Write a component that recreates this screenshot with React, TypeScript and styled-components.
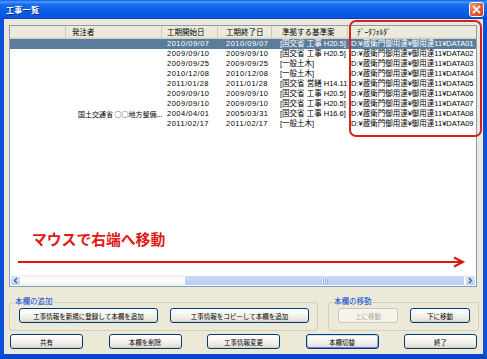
import React from 'react';
import styled, { createGlobalStyle, css } from 'styled-components';

const GlobalStyle = createGlobalStyle`
  html, body {
    margin: 0;
    padding: 0;
    background: #ffffff;
  }
  body {
    font-family: 'Liberation Sans', 'Noto Sans CJK JP', sans-serif;
  }
`;

const JP = `'Liberation Sans', 'Noto Sans CJK JP', sans-serif`;

const columns = [
  { label: '', width: 56, headPad: 6, cellPad: 4 },
  { label: '発注者', width: 96, headPad: 6, cellPad: 12 },
  { label: '工期開始日', width: 56, headPad: 5, cellPad: 5 },
  { label: '工期終了日', width: 54, headPad: 8, cellPad: 8 },
  { label: '準拠する基準案', width: 76, headPad: 10, cellPad: 8 },
  { label: 'ﾃﾞｰﾀﾌｫﾙﾀﾞ', width: 0, headPad: 9, cellPad: 3 },
];

const gridTemplate = columns.map((c) => (c.width ? `${c.width}px` : '1fr')).join(' ');

const rows = [
  ['', '2010/09/07', '2010/09/07', '[国交省 工事 H20.5]', 'D:¥蔵衛門御用達¥御用達11¥DATA01'],
  ['', '2009/09/10', '2009/09/10', '[国交省 工事 H20.5]', 'D:¥蔵衛門御用達¥御用達11¥DATA02'],
  ['', '2009/09/25', '2009/09/25', '[一般土木]', 'D:¥蔵衛門御用達¥御用達11¥DATA03'],
  ['', '2010/12/08', '2010/12/08', '[一般土木]', 'D:¥蔵衛門御用達¥御用達11¥DATA04'],
  ['', '2011/01/28', '2011/01/28', '[国交省 営繕 H14.11]', 'D:¥蔵衛門御用達¥御用達11¥DATA05'],
  ['', '2009/09/10', '2009/09/10', '[国交省 工事 H20.5]', 'D:¥蔵衛門御用達¥御用達11¥DATA06'],
  ['', '2009/09/10', '2009/09/10', '[国交省 工事 H20.5]', 'D:¥蔵衛門御用達¥御用達11¥DATA07'],
  ['国土交通省 ○○地方整備...', '2004/04/01', '2005/03/31', '[国交省 工事 H16.6]', 'D:¥蔵衛門御用達¥御用達11¥DATA08'],
  ['', '2011/02/17', '2011/02/17', '[一般土木]', 'D:¥蔵衛門御用達¥御用達11¥DATA09'],
];

const Window = styled.div`
  position: relative;
  width: 487px;
  height: 359px;
  box-sizing: border-box;
  display: flex;
  flex-direction: column;
  background: #ece9d8;
  overflow: hidden;
`;

const TitleBar = styled.div`
  height: 19px;
  flex: none;
  display: flex;
  align-items: center;
  justify-content: space-between;
  padding: 0 3px 0 6px;
  background: linear-gradient(
    180deg,
    #0a5ce0 0%,
    #4a9bff 10%,
    #1d6cf0 22%,
    #0b5de6 60%,
    #0a57e0 88%,
    #0044c8 100%
  );
`;

const TitleText = styled.span`
  color: #ffffff;
  font-family: ${JP};
  font-weight: bold;
  font-size: 8px;
  letter-spacing: 0.3px;
  text-shadow: 1px 1px 0 #0a2a8a;
`;

const CloseButton = styled.div`
  width: 13px;
  height: 13px;
  border: 1px solid #ffffff;
  border-radius: 3px;
  background: radial-gradient(circle at 30% 30%, #f19b7e 0%, #e0583a 55%, #c33f1d 100%);
  display: flex;
  align-items: center;
  justify-content: center;
`;

const Frame = styled.div`
  flex: 1;
  display: flex;
  flex-direction: column;
  border-left: 4px solid #0c4fd8;
  border-right: 4px solid #0c4fd8;
  border-bottom: 5px solid #0a46c8;
  padding: 6px 6px 4px 5px;
`;

const ListView = styled.div`
  height: 262px;
  flex: none;
  box-sizing: border-box;
  border: 1px solid #7f9db9;
  background: #ffffff;
  display: flex;
  flex-direction: column;
`;

const HeaderRow = styled.div`
  display: grid;
  grid-template-columns: ${gridTemplate};
  height: 13px;
  background: #ebeadb;
  box-shadow: inset 0 -1px 0 #d6d2c2, inset 0 -2px 0 #e2decd;
`;

const HeaderCell = styled.div<{ $pad: number }>`
  font-family: ${JP};
  font-size: 7.5px;
  line-height: 13px;
  color: #000000;
  padding-left: ${({ $pad }) => $pad}px;
  border-right: 1px solid #cdcab9;
  white-space: nowrap;
  overflow: hidden;

  &:last-child {
    border-right: none;
  }
`;

const Row = styled.div<{ $selected?: boolean }>`
  display: grid;
  grid-template-columns: ${gridTemplate};
  height: 10px;
  color: ${({ $selected }) => ($selected ? '#ffffff' : '#000000')};
  background: ${({ $selected }) => ($selected ? '#5b7d9c' : 'transparent')};
`;

const Cell = styled.div<{ $pad: number; $date?: boolean; $jp?: boolean }>`
  font-family: ${({ $jp }) => ($jp ? `'Noto Sans CJK JP', sans-serif` : JP)};
  font-size: ${({ $jp }) => ($jp ? '7px' : '7.5px')};
  line-height: 10px;
  padding-left: ${({ $pad }) => $pad}px;
  white-space: nowrap;
  overflow: hidden;
  letter-spacing: ${({ $date }) => ($date ? '0.5px' : '0')};
`;

const EmptyArea = styled.div`
  flex: 1;
`;

const HScroll = styled.div`
  height: 11px;
  flex: none;
  display: flex;
  background: linear-gradient(180deg, #f3f1ec, #fefefd 50%, #f0efe8);
`;

const ScrollArrow = styled.div`
  width: 11px;
  flex: none;
  box-sizing: border-box;
  border: 1px solid #ffffff;
  border-radius: 2px;
  background: linear-gradient(180deg, #d8e5fd, #b8cdf8);
  display: flex;
  align-items: center;
  justify-content: center;
`;

const Track = styled.div`
  flex: 1;
  display: flex;
  justify-content: flex-end;
`;

const Thumb = styled.div`
  width: 281px;
  box-sizing: border-box;
  border: 1px solid #ffffff;
  border-radius: 2px;
  background: linear-gradient(180deg, #cad9fb, #b6cbf6);
  display: flex;
  align-items: center;
  justify-content: center;
`;

const Grip = styled.div`
  width: 6px;
  height: 4px;
  background: repeating-linear-gradient(90deg, #eef4fe 0 1px, #8faae8 1px 2px);
`;

const GroupRow = styled.div`
  display: flex;
  gap: 10px;
  margin-top: 10px;
  height: 34px;
`;

const Group = styled.fieldset<{ $width: number }>`
  width: ${({ $width }) => $width}px;
  box-sizing: border-box;
  margin: 0;
  padding: 1px 8px 0 9px;
  border: 1px solid #d0d0bf;
  border-radius: 3px;
  display: flex;
  gap: 12px;
  align-items: flex-start;
`;

const Legend = styled.legend`
  font-family: ${JP};
  font-size: 7.5px;
  line-height: 10px;
  color: #0046d5;
  padding: 0 1px;
  margin-left: -5px;
`;

const Button = styled.div<{ $width: number; $disabled?: boolean; $focused?: boolean }>`
  width: ${({ $width }) => $width}px;
  height: 15px;
  box-sizing: border-box;
  flex: none;
  display: flex;
  align-items: center;
  justify-content: center;
  border-radius: 3px;
  font-family: ${JP};
  font-size: 6.5px;
  white-space: nowrap;
  border: 1px solid ${({ $disabled }) => ($disabled ? '#cac8bb' : '#003c74')};
  color: ${({ $disabled }) => ($disabled ? '#aca899' : '#000000')};
  background: ${({ $disabled }) =>
    $disabled ? '#f5f4ea' : 'linear-gradient(180deg, #ffffff 0%, #f4f3ee 50%, #e6e3da 85%, #d6d0c5 100%)'};
  ${({ $focused }) =>
    $focused &&
    css`
      box-shadow: inset 0 1px 0 #cee7ff, inset 0 -1px 0 #6982ee, inset 1px 0 0 #b9d1f7,
        inset -1px 0 0 #8aabe8;
    `}
`;

const BottomBar = styled.div`
  display: flex;
  justify-content: space-between;
  margin-top: 3px;
  padding-left: 1px;
`;

const Highlight = styled.div`
  position: absolute;
  left: 349px;
  top: 20px;
  width: 133px;
  height: 117px;
  box-sizing: border-box;
  border: 2px solid #d42222;
  border-radius: 7px;
  pointer-events: none;
`;

const Hint = styled.div`
  position: absolute;
  left: 32px;
  top: 229px;
  font-family: 'Noto Sans CJK JP', sans-serif;
  font-weight: bold;
  font-size: 14.8px;
  line-height: 20px;
  color: #e01818;
`;

const HintArrow = styled.svg`
  position: absolute;
  left: 18px;
  top: 256px;
`;

export default function App() {
  return (
    <>
      <GlobalStyle />
      <Window>
        <TitleBar>
          <TitleText>工事一覧</TitleText>
          <CloseButton>
            <svg width="9" height="9" viewBox="0 0 9 9">
              <path d="M1.5 1.5 L7.5 7.5 M7.5 1.5 L1.5 7.5" stroke="#ffffff" strokeWidth="1.6" strokeLinecap="square" />
            </svg>
          </CloseButton>
        </TitleBar>
        <Frame>
          <ListView>
            <HeaderRow>
              {columns.map((c, i) => (
                <HeaderCell key={i} $pad={c.headPad}>
                  {c.label}
                </HeaderCell>
              ))}
            </HeaderRow>
            {rows.map((r, i) => (
              <Row key={i} $selected={i === 0}>
                <Cell $pad={columns[0].cellPad} />
                {r.map((v, j) => (
                  <Cell key={j} $pad={columns[j + 1].cellPad} $date={j === 1 || j === 2} $jp={j === 0}>
                    {v}
                  </Cell>
                ))}
              </Row>
            ))}
            <EmptyArea />
            <HScroll>
              <ScrollArrow>
                <svg width="5" height="7" viewBox="0 0 5 7">
                  <path d="M4 1 L1.5 3.5 L4 6" stroke="#4d6185" strokeWidth="1.3" fill="none" />
                </svg>
              </ScrollArrow>
              <Track>
                <Thumb>
                  <Grip />
                </Thumb>
              </Track>
              <ScrollArrow>
                <svg width="5" height="7" viewBox="0 0 5 7">
                  <path d="M1 1 L3.5 3.5 L1 6" stroke="#4d6185" strokeWidth="1.3" fill="none" />
                </svg>
              </ScrollArrow>
            </HScroll>
          </ListView>

          <GroupRow>
            <Group $width={310}>
              <Legend>本欄の追加</Legend>
              <Button $width={139}>工事情報を新規に登録して本欄を追加</Button>
              <Button $width={139}>工事情報をコピーして本欄を追加</Button>
            </Group>
            <Group $width={150}>
              <Legend>本欄の移動</Legend>
              <Button $width={60} $disabled>
                上に移動
              </Button>
              <Button $width={60}>下に移動</Button>
            </Group>
          </GroupRow>

          <BottomBar>
            <Button $width={73}>共有</Button>
            <Button $width={73}>本欄を削除</Button>
            <Button $width={73}>工事情報変更</Button>
            <Button $width={73} $focused>
              本欄切替
            </Button>
            <Button $width={73}>終了</Button>
          </BottomBar>
        </Frame>

        <Highlight />
        <Hint>マウスで右端へ移動</Hint>
        <HintArrow width="448" height="12" viewBox="0 0 448 12">
          <path d="M0 6 L445 6" stroke="#dd1515" strokeWidth="2" />
          <path d="M436 1.5 L445 6 L436 10.5" stroke="#dd1515" strokeWidth="2" fill="none" />
        </HintArrow>
      </Window>
    </>
  );
}
